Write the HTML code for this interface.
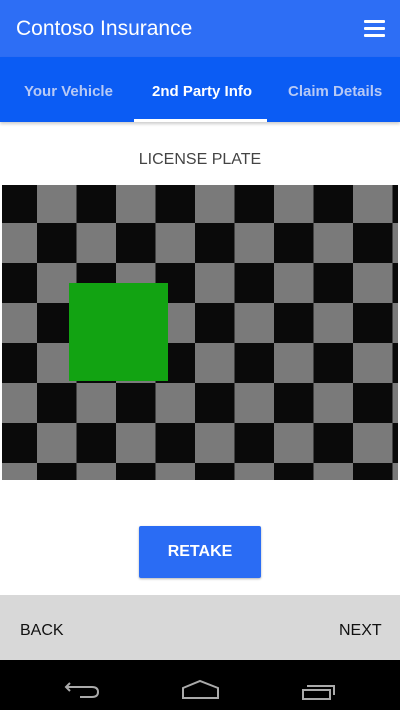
<!DOCTYPE html>
<html><head><meta charset="utf-8"><style>
*{margin:0;padding:0;box-sizing:border-box}
body{width:400px;height:710px;position:relative;background:#fff;font-family:"Liberation Sans",sans-serif;overflow:hidden}
.top{position:absolute;left:0;top:0;width:400px;height:57px;background:#2d6ef5}
.top .t{position:absolute;left:16px;top:17px;color:#fff;font-size:21px}
.ham{position:absolute;left:364px;top:20px;width:21px;height:16px}
.ham i{position:absolute;left:0;width:21px;height:3px;background:#fff;border-radius:1px}
.tabs{position:absolute;left:0;top:57px;width:400px;height:65px;background:#0b5cf4;box-shadow:0 2px 3px rgba(0,0,0,.2)}
.tab{position:absolute;top:26px;font-size:15px;font-weight:bold;color:#b7c9f5}
.ind{position:absolute;left:134px;top:62px;width:133px;height:3px;background:#fff}
.h{position:absolute;top:151px;width:400px;text-align:center;color:#444;font-size:16px}
.cb{position:absolute;left:2px;top:185px;width:396px;height:295px;background:conic-gradient(#7a7a7a 0 25%,#0a0a0a 0 50%,#7a7a7a 0 75%,#0a0a0a 0);background-size:79px 80px;background-position:-4.5px -2px}
.g{position:absolute;left:69px;top:283px;width:99px;height:98px;background:#12a312}
.btn{position:absolute;left:139px;top:526px;width:122px;height:52px;background:#2a6cf4;border-radius:2px;color:#fff;font-weight:bold;font-size:16px;text-align:center;line-height:52px;box-shadow:0 1px 2px rgba(0,0,0,.3)}
.bar{position:absolute;left:0;top:595px;width:400px;height:65px;background:#d8d8d8}
.bar span{position:absolute;top:27px;font-size:16px;color:#111}
.nav{position:absolute;left:0;top:660px;width:400px;height:50px;background:#000}
</style></head><body>
<div class="top"><div class="t">Contoso Insurance</div>
<div class="ham"><i style="top:0"></i><i style="top:7px"></i><i style="top:14px"></i></div></div>
<div class="tabs">
<div class="tab" style="left:24px">Your Vehicle</div>
<div class="tab" style="left:152px;color:#fff">2nd Party Info</div>
<div class="tab" style="left:288px">Claim Details</div>
<div class="ind"></div></div>
<div class="h">LICENSE PLATE</div>
<div class="cb"></div><div class="g"></div>
<div class="btn">RETAKE</div>
<div class="bar"><span style="left:20px">BACK</span><span style="left:339px">NEXT</span></div>
<div class="nav"><svg width="400" height="50" fill="none" stroke="#aaa" stroke-width="2">
<path d="M70 23 L66 27 L70 31 M66 27 H92 Q98 27 98 32 Q98 37 92 37 H80"/>
<path d="M183 38 V28 L200 21 L218 28 V38 Z"/>
<path d="M303 30 H330 V39 H303 Z M307 26 H334 V35"/>
</svg></div>
</body></html>
